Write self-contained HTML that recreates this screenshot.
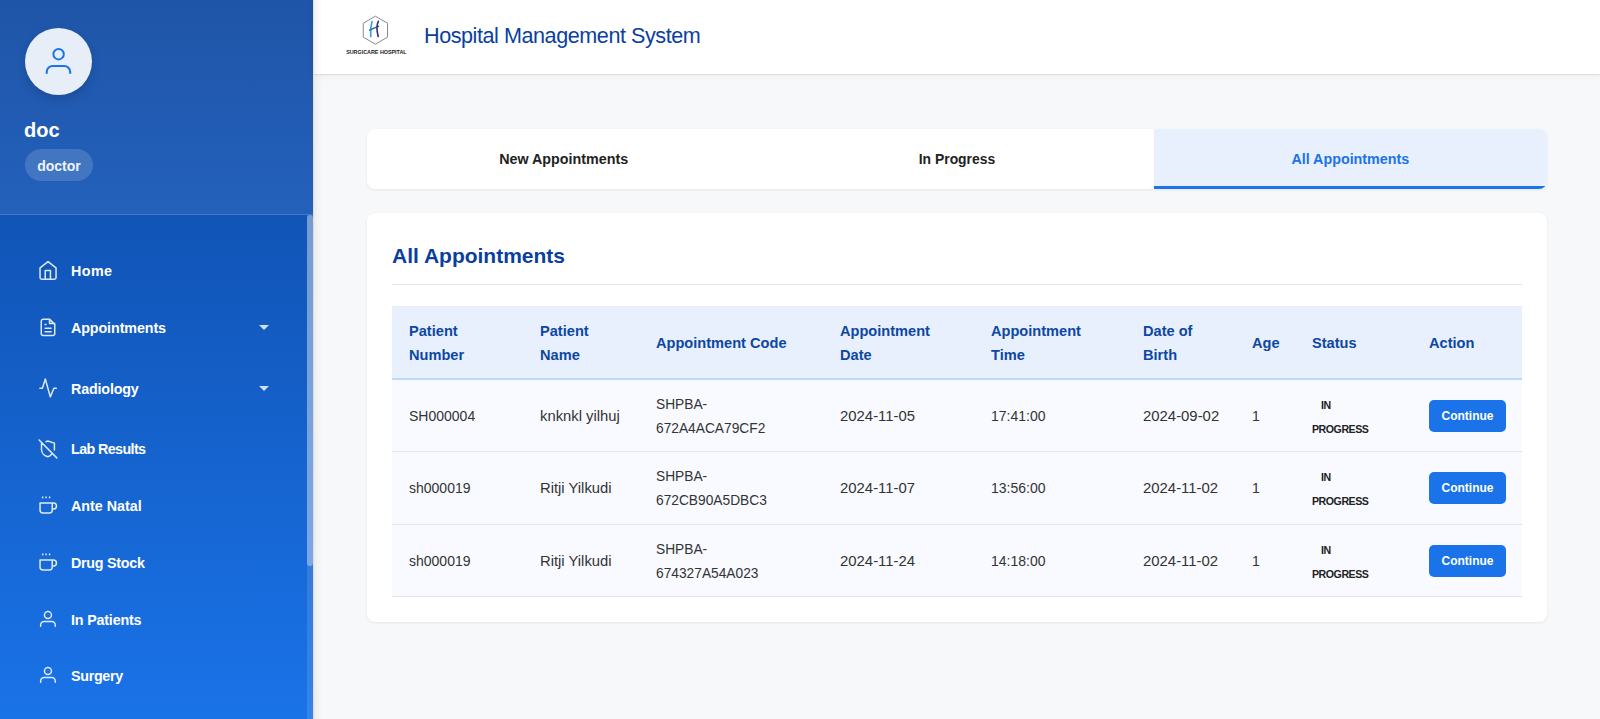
<!DOCTYPE html>
<html>
<head>
<meta charset="utf-8">
<style>
*{box-sizing:border-box;margin:0;padding:0}
html,body{width:1600px;height:719px;overflow:hidden;background:#f7f8fa;font-family:"Liberation Sans",sans-serif;}
#sidebar{position:absolute;left:0;top:0;width:313px;height:719px;background:linear-gradient(180deg,#0d47a1 0%,#1a73e8 100%);overflow:hidden}
#profile{position:absolute;left:0;top:0;width:313px;height:215px;background:rgba(255,255,255,0.08);border-bottom:1px solid rgba(255,255,255,0.15)}
#avatar{position:absolute;left:25px;top:28px;width:67px;height:67px;border-radius:50%;background:#e8eef8;box-shadow:0 4px 10px rgba(0,0,0,0.15)}
#avatar svg{position:absolute;left:0;top:0}
#uname{position:absolute;left:24px;top:114.5px;font-size:20px;font-weight:bold;color:#fff;line-height:30px}
#role{position:absolute;left:25px;top:149px;width:68px;height:32px;border-radius:16px;background:rgba(255,255,255,0.15);color:#eef3fb;font-size:14px;font-weight:bold;line-height:34px;text-align:center}
.ico{position:absolute;left:32px}
.nt{position:absolute;left:71px;margin-top:-0.6px;font-size:14.3px;font-weight:bold;color:#fff;line-height:20px;white-space:nowrap}
.caret{position:absolute;left:258.7px;margin-top:-0.5px;width:0;height:0;border-left:5.5px solid transparent;border-right:5.5px solid transparent;border-top:5.6px solid rgba(255,255,255,0.8)}
#track{position:absolute;left:307px;top:215px;width:6px;height:504px;background:rgba(255,255,255,0.12)}
#thumb{position:absolute;left:307px;top:215px;width:6px;height:351px;border-radius:3px;background:rgba(255,255,255,0.34)}
#header{position:absolute;left:313px;top:0;width:1287px;height:74px;background:#fff;box-shadow:0 1px 1px rgba(0,0,0,0.07),0 2px 8px rgba(0,0,0,0.05)}
#title{position:absolute;left:424px;top:20.9px;font-size:21.6px;letter-spacing:-0.45px;color:#0b3f9f;line-height:30px;white-space:nowrap}
#sbshadow{position:absolute;z-index:5;left:313px;top:0;width:10px;height:719px;background:linear-gradient(90deg,rgba(0,0,0,0.06),rgba(0,0,0,0.02) 50%,rgba(0,0,0,0))}
#sbline{position:absolute;z-index:6;left:313px;top:0;width:1px;height:719px;background:rgba(225,205,175,0.45)}
#tabs{position:absolute;left:367px;top:129px;width:1180px;height:60px;background:#fff;border-radius:8px;box-shadow:0 1px 3px rgba(0,0,0,0.08);overflow:hidden}
.tab{position:absolute;top:0;height:60px;width:393.33px;text-align:center;font-size:14.3px;font-weight:bold;color:#222;line-height:60px}
.tab.active{background:#e8f0fe;color:#1a73e8;box-shadow:inset 0 -3px 0 #1a73e8}
#card{position:absolute;left:367px;top:213px;width:1180px;height:409px;background:#fff;border-radius:8px;box-shadow:0 1px 3px rgba(0,0,0,0.08)}
#heading{position:absolute;left:392px;top:241px;font-size:21px;font-weight:bold;color:#0b3f9f;line-height:30px;white-space:nowrap}
#hr{position:absolute;left:392px;top:284px;width:1130px;height:1px;background:#e3e6ea}
table{position:absolute;left:392px;top:306px;width:1130px;border-collapse:separate;border-spacing:0;table-layout:fixed}
th{background:#e8f0fe;color:#0d47a1;font-size:14.6px;font-weight:bold;text-align:left;padding:14px 0 11px 17px;line-height:23.5px;border-bottom:2px solid #bcdaf8;vertical-align:middle}
td{background:#f8faff;color:#333;font-size:14px;text-align:left;padding:13px 0 11px 17px;line-height:23.5px;border-bottom:1px solid #e2e4e8;vertical-align:middle}
th,td{white-space:nowrap}
td.nm{font-size:14.8px}
td.dt{font-size:14.9px}
td.cd{font-size:13.75px}
tr.r2 td{padding-bottom:12px}
.st{line-height:20px;font-size:10.6px;font-weight:bold;color:#222;padding:0 8px 0 9px;letter-spacing:-0.45px}
.btn{position:relative;top:-1px;display:inline-block;width:77px;height:32px;border-radius:5px;background:#1a73e8;color:#fff;font-size:12px;font-weight:bold;line-height:33px;text-align:center;vertical-align:middle}
</style>
</head>
<body>
<div id="sidebar">
  <div id="profile">
    <div id="avatar">
      <svg width="67" height="67" viewBox="0 0 67 67"><circle cx="33.6" cy="26.2" r="5.2" fill="none" stroke="#1a73e8" stroke-width="2"/><path d="M21.7 45.8 V44 a6 6 0 0 1 6 -6 H39.2 a6 6 0 0 1 6 6 V45.8" fill="none" stroke="#1a73e8" stroke-width="2.1"/></svg>
    </div>
    <div id="uname">doc</div>
    <div id="role">doctor</div>
  </div>
  <svg class="ico" style="top:255px" width="30" height="30" viewBox="0 0 30 30"><path fill="none" stroke="rgba(255,255,255,0.86)" stroke-width="1.5" stroke-linecap="round" stroke-linejoin="round" d="M8.05 22.6 V12.9 L16 6.6 L24.05 12.9 V22.6 A1.65 1.65 0 0 1 22.4 24.25 H9.7 A1.65 1.65 0 0 1 8.05 22.6 Z M13.25 24.25 V15.55 H18.45 V24.25"/></svg>
  <div class="nt" style="top:261.95px;letter-spacing:0.45px">Home</div>
  <svg class="ico" style="top:313px" width="30" height="30" viewBox="0 0 30 30"><path fill="none" stroke="rgba(255,255,255,0.86)" stroke-width="1.5" stroke-linecap="round" stroke-linejoin="round" d="M11.25 6.15 H17.5 L22.75 11.4 V20.55 A2 2 0 0 1 20.75 22.55 H11.25 A2 2 0 0 1 9.25 20.55 V8.15 A2 2 0 0 1 11.25 6.15 Z M17.5 6.15 V10.4 H22.75 M13.1 11.5 H14 M13.1 15.2 H19.1 M13.1 18.75 H19.1"/></svg>
  <div class="nt" style="top:318.55px;letter-spacing:-0.1px">Appointments</div>
  <div class="caret" style="top:325.00px"></div>
  <svg class="ico" style="top:374px" width="30" height="30" viewBox="0 0 30 30"><path fill="none" stroke="rgba(255,255,255,0.86)" stroke-width="1.5" stroke-linecap="round" stroke-linejoin="round" d="M7.9 14.2 H10.4 L13.3 5 L18.3 22.9 L21.9 14.2 H24.3"/></svg>
  <div class="nt" style="top:379.90px;letter-spacing:-0.16px">Radiology</div>
  <div class="caret" style="top:386.35px"></div>
  <svg class="ico" style="top:435px" width="30" height="30" viewBox="0 0 30 30"><path fill="none" stroke="rgba(255,255,255,0.86)" stroke-width="1.5" stroke-linecap="round" stroke-linejoin="round" d="M7.1 5 L24.8 22.9 M9.5 8.4 V14.5 C9.5 18 12.5 20.9 15.8 21.8 C17.3 21.4 18.7 20.4 19.9 19 M14 6.8 L15.8 6 L22.4 8.1 V14.9"/></svg>
  <div class="nt" style="top:439.95px;letter-spacing:-0.6px">Lab Results</div>
  <svg class="ico" style="top:492px" width="30" height="30" viewBox="0 0 30 30"><path fill="none" stroke="rgba(255,255,255,0.86)" stroke-width="1.5" stroke-linecap="round" stroke-linejoin="round" d="M8.05 10.95 H20.25 V17.95 A3 3 0 0 1 17.25 20.95 H11.05 A3 3 0 0 1 8.05 17.95 Z M20.25 10.95 H21.4 A3.07 3.07 0 0 1 21.4 17.1 H20.25"/><path fill="none" stroke="rgba(255,255,255,0.86)" stroke-width="1.5" d="M10.7 4.5 V6.3 M14.1 4.5 V6.3 M17.6 4.5 V6.3"/></svg>
  <div class="nt" style="top:496.95px">Ante Natal</div>
  <svg class="ico" style="top:548.8px" width="30" height="30" viewBox="0 0 30 30"><path fill="none" stroke="rgba(255,255,255,0.86)" stroke-width="1.5" stroke-linecap="round" stroke-linejoin="round" d="M8.05 10.95 H20.25 V17.95 A3 3 0 0 1 17.25 20.95 H11.05 A3 3 0 0 1 8.05 17.95 Z M20.25 10.95 H21.4 A3.07 3.07 0 0 1 21.4 17.1 H20.25"/><path fill="none" stroke="rgba(255,255,255,0.86)" stroke-width="1.5" d="M10.7 4.5 V6.3 M14.1 4.5 V6.3 M17.6 4.5 V6.3"/></svg>
  <div class="nt" style="top:553.75px;letter-spacing:-0.27px">Drug Stock</div>
  <svg class="ico" style="top:605px" width="30" height="30" viewBox="0 0 30 30"><circle fill="none" stroke="rgba(255,255,255,0.86)" stroke-width="1.5" stroke-linecap="round" stroke-linejoin="round" cx="15.95" cy="10" r="3.5"/><path fill="none" stroke="rgba(255,255,255,0.86)" stroke-width="1.5" stroke-linecap="round" stroke-linejoin="round" d="M8.65 21.15 V20 A3.45 3.45 0 0 1 12.1 16.55 H19.8 A3.45 3.45 0 0 1 23.25 20 V21.15"/></svg>
  <div class="nt" style="top:610.65px;letter-spacing:-0.18px">In Patients</div>
  <svg class="ico" style="top:660.9px" width="30" height="30" viewBox="0 0 30 30"><circle fill="none" stroke="rgba(255,255,255,0.86)" stroke-width="1.5" stroke-linecap="round" stroke-linejoin="round" cx="15.95" cy="10" r="3.5"/><path fill="none" stroke="rgba(255,255,255,0.86)" stroke-width="1.5" stroke-linecap="round" stroke-linejoin="round" d="M8.65 21.15 V20 A3.45 3.45 0 0 1 12.1 16.55 H19.8 A3.45 3.45 0 0 1 23.25 20 V21.15"/></svg>
  <div class="nt" style="top:666.55px;letter-spacing:-0.3px">Surgery</div>
  <div id="track"></div>
  <div id="thumb"></div>
</div>
<div id="sbshadow"></div><div id="sbline"></div>
<div id="header"></div>
<svg id="logo" width="70" height="50" viewBox="0 0 70 50" style="position:absolute;left:340px;top:10px">
  <polygon points="35.4,6.2 47.52,13.2 47.52,27.2 35.4,34.2 23.28,27.2 23.28,13.2" fill="none" stroke="#8a8a8a" stroke-width="1"/>
  <path d="M32 11.5 C31 15 30.2 20 30.8 26.5" fill="none" stroke="#3aa0d0" stroke-width="1.6" stroke-linecap="round"/>
  <path d="M29.5 20.2 L38.8 16.2" fill="none" stroke="#1a6aa8" stroke-width="1.3" stroke-linecap="round"/>
  <path d="M38.3 11.3 C36.5 15 36.8 21 38.2 26.5" fill="none" stroke="#3a2a80" stroke-width="1.6" stroke-linecap="round"/>
  <text x="36.4" y="43.6" text-anchor="middle" font-family="Liberation Sans" font-weight="bold" font-size="5.6" fill="#222" textLength="60.5" lengthAdjust="spacingAndGlyphs">SURGICARE HOSPITAL</text>
</svg>
<div id="title">Hospital Management System</div>

<div id="tabs">
  <div class="tab" style="left:0">New Appointments</div>
  <div class="tab" style="left:393.33px;font-size:13.9px">In Progress</div>
  <div class="tab active" style="left:786.67px">All Appointments</div>
</div>

<div id="card"></div>
<div id="heading">All Appointments</div>
<div id="hr"></div>

<table>
<colgroup><col style="width:131px"><col style="width:116px"><col style="width:184px"><col style="width:151px"><col style="width:152px"><col style="width:109px"><col style="width:60px"><col style="width:117px"><col style="width:110px"></colgroup>
<tr><th>Patient<br>Number</th><th>Patient<br>Name</th><th>Appointment Code</th><th>Appointment<br>Date</th><th>Appointment<br>Time</th><th>Date of<br>Birth</th><th>Age</th><th>Status</th><th>Action</th></tr>
<tr><td>SH000004</td><td class="nm">knknkl yilhuj</td><td class="cd">SHPBA-<br>672A4ACA79CF2</td><td class="dt">2024-11-05</td><td>17:41:00</td><td class="dt">2024-09-02</td><td>1</td><td><span class="st">IN<br>PROGRESS</span></td><td><span class="btn">Continue</span></td></tr>
<tr class="r2"><td>sh000019</td><td class="nm">Ritji Yilkudi</td><td class="cd">SHPBA-<br>672CB90A5DBC3</td><td class="dt">2024-11-07</td><td>13:56:00</td><td class="dt">2024-11-02</td><td>1</td><td><span class="st">IN<br>PROGRESS</span></td><td><span class="btn">Continue</span></td></tr>
<tr><td>sh000019</td><td class="nm">Ritji Yilkudi</td><td class="cd">SHPBA-<br>674327A54A023</td><td class="dt">2024-11-24</td><td>14:18:00</td><td class="dt">2024-11-02</td><td>1</td><td><span class="st">IN<br>PROGRESS</span></td><td><span class="btn">Continue</span></td></tr>
</table>
</body>
</html>
